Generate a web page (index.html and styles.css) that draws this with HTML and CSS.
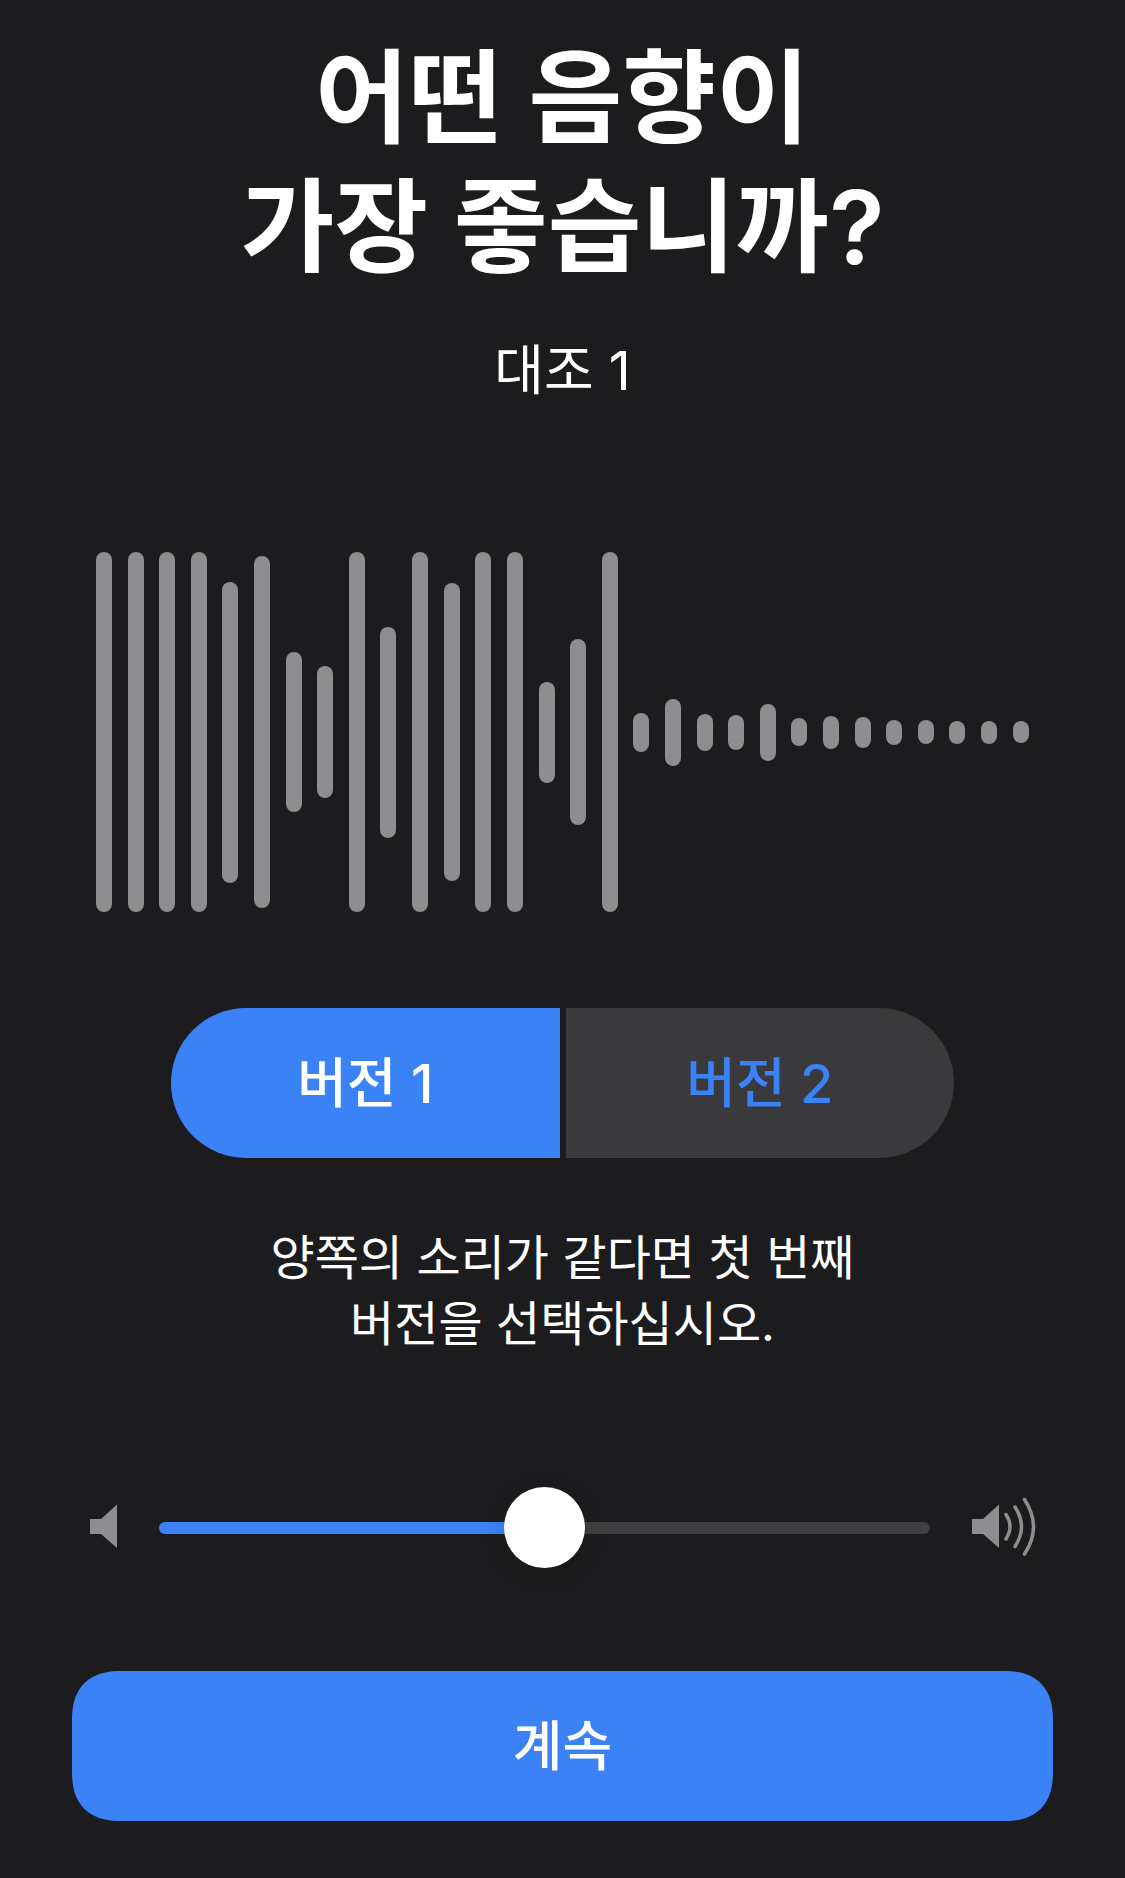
FILE: index.html
```html
<!DOCTYPE html>
<html lang="ko">
<head>
    <meta charset="UTF-8">
    <meta name="viewport" content="width=device-width, initial-scale=1.0">
    <title>대조 1</title>
    <link rel="stylesheet" href="styles.css">
</head>
<body>

    <main class="page">
        <h1 class="title">어떤 음향이<br>가장 좋습니까?</h1>
        <p class="subtitle">대조 1</p>

        <div class="waveform" id="waveform"></div>

        <div class="versions">
            <button type="button" class="version active" aria-pressed="true">버전 1</button>
            <button type="button" class="version" aria-pressed="false">버전 2</button>
        </div>

        <p class="hint">양쪽의 소리가 같다면 첫 번째<br>버전을 선택하십시오.</p>

        <div class="volume">
            <svg class="icon-low" viewBox="0 0 27 64" aria-hidden="true">
                <path d="M0 23H11L27 8.500V52L11 38H0Z"/>
            </svg>
            <input type="range" class="slider" min="0" max="100" value="50" aria-label="음량">
            <svg class="icon-high" viewBox="0 0 63 64" aria-hidden="true">
                <path d="M0 23H11L27 8.500V52L11 38H0Z"/>
                <path class="wave" d="M34 18.500Q42 30.500 34 43M43 11Q56 30.500 43 50.500M52.500 3.500Q70.500 31 52.500 58"/>
            </svg>
        </div>

        <button type="button" class="continue">계속</button>
    </main>

    <script>
        const levels = [360, 360, 360, 360, 301, 352, 160, 132, 360, 211,
                        360, 298, 360, 360, 101, 186, 360, 39, 67, 37,
                        35, 57, 28, 33, 31, 25, 24, 23, 23, 22];
        const waveform = document.getElementById("waveform");

        levels.forEach(level => {
            const bar = document.createElement("span");
            bar.className = "bar";
            bar.style.height = level + "px";
            waveform.appendChild(bar);
        });
    </script>
</body>
</html>
```

FILE: styles.css
```css
* {
    box-sizing: border-box;
}
body {
    margin: 0;
    background-color: #1c1c1e;
    color: white;
    font-family: Inter, "Noto Sans CJK KR", sans-serif;
    text-align: center;
}
.page {
    display: flex;
    flex-direction: column;
    padding: 34px 72px 57px;
}
.title {
    margin: 0;
    font-size: 102px;
    line-height: 129px;
    font-weight: 600;
}
.subtitle {
    margin: 46px 0 148px;
    font-size: 54px;
    line-height: 66px;
}

/* Waveform */
.waveform {
    display: flex;
    justify-content: space-between;
    align-items: center;
    height: 360px;
    padding: 0 24px;
}
.bar {
    width: 16px;
    border-radius: 8px;
    background-color: #8e8e90;
}

/* Version switch */
.versions {
    display: flex;
    gap: 6px;
    margin: 96px 99px 67px;
}
.version {
    flex: 1;
    height: 150px;
    padding: 0 0 8px;
    border: none;
    background-color: #3a3a3c;
    color: #3b82f7;
    font-family: inherit;
    font-size: 54px;
    font-weight: 500;
    cursor: pointer;
}
.version:first-child {
    border-radius: 75px 0 0 75px;
}
.version:last-child {
    border-radius: 0 75px 75px 0;
}
.version.active {
    background-color: #3b82f7;
    color: white;
}
.hint {
    margin: 0;
    font-size: 48px;
    line-height: 66px;
}

/* Volume */
.volume {
    display: flex;
    align-items: center;
    gap: 42px;
    margin: 130px 18px 103px;
}
.volume svg {
    flex: none;
    height: 64px;
    fill: #8e8e90;
    overflow: visible;
}
.icon-low {
    width: 27px;
}
.icon-high {
    width: 63px;
}
.volume .wave {
    fill: none;
    stroke: #8e8e90;
    stroke-width: 3.5;
    stroke-linecap: round;
}
.slider {
    -webkit-appearance: none;
    appearance: none;
    flex: 1;
    min-width: 0;
    height: 81px;
    margin: 0;
    background: transparent;
}
.slider::-webkit-slider-runnable-track {
    height: 12px;
    border-radius: 6px;
    background: linear-gradient(to right, #3b82f7 50%, #3f3f41 50%);
}
.slider::-webkit-slider-thumb {
    -webkit-appearance: none;
    width: 81px;
    height: 81px;
    margin-top: -35px;
    border-radius: 50%;
    background-color: white;
    box-shadow: 0 6px 24px rgba(0, 0, 0, 0.1);
}

.continue {
    height: 150px;
    padding: 0 0 8px;
    border: none;
    border-radius: 50px;
    corner-shape: superellipse(1.3);
    background-color: #3b82f7;
    color: white;
    font-family: inherit;
    font-size: 54px;
    font-weight: 500;
    cursor: pointer;
}
```
